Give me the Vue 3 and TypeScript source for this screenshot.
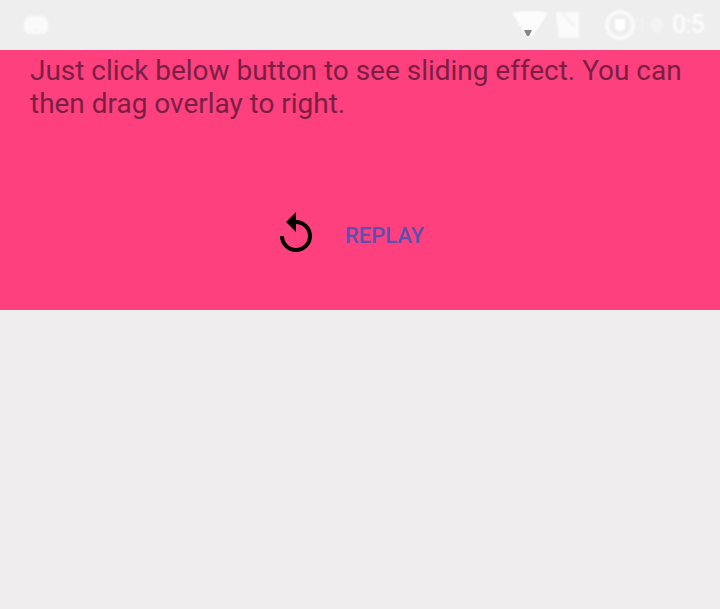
<script setup lang="ts">
import { ref } from 'vue'

const turns = ref<number>(0)
const message = 'Just click below button to see sliding effect. You can then drag overlay to right.'

function replay(): void {
  turns.value += 1
}
</script>

<template>
  <main class="screen">
    <header class="status-bar">
      <svg class="notification soft" viewBox="0 0 26 22" aria-hidden="true">
        <path d="M5 2h16l4 6v7l-3 5H4l-3-5V8z" fill="#fafafa" />
        <path d="M7 10h3M16 10h3M10 16h6" stroke="#f4f4f4" stroke-width="2" fill="none" />
      </svg>
      <svg class="wifi" viewBox="0 0 36 28" aria-hidden="true">
        <path class="soft" d="M0 2Q18-3 36 2L20 26h-5z" fill="#fcfcfc" />
        <path d="M12 19h8l-3 6h-2z" fill="#858585" />
      </svg>
      <svg class="sim soft" viewBox="0 0 24 28" aria-hidden="true">
        <path d="M1 1h23v26H4z" fill="#fbfbfb" />
        <path d="M7 1l12 14" stroke="#f2f2f2" stroke-width="3" />
      </svg>
      <svg class="battery soft" viewBox="0 0 32 32" aria-hidden="true">
        <circle cx="16" cy="16" r="13" fill="none" stroke="#fafafa" stroke-width="4" />
        <path d="M11 10h10v9l-3 3h-4l-3-3z" fill="#fff" />
      </svg>
      <svg class="smudge soft" viewBox="0 0 26 20" aria-hidden="true">
        <path d="M0 2h4v15H1" fill="#f1f1f1" />
        <ellipse cx="17" cy="10" rx="6" ry="8" fill="#f3f3f3" />
      </svg>
      <span class="clock soft">0:5</span>
    </header>
    <section class="overlay">
      <p class="message">{{ message }}</p>
      <div class="actions">
        <svg :key="turns" class="replay-icon" viewBox="0 0 24 24" aria-hidden="true">
          <path d="M12 5V1L7 6l5 5V7c3.31 0 6 2.69 6 6s-2.69 6-6 6-6-2.69-6-6H4c0 4.42 3.58 8 8 8s8-3.58 8-8-3.58-8-8-8z" />
        </svg>
        <button class="replay" type="button" @click="replay">REPLAY</button>
      </div>
    </section>
  </main>
</template>

<style>
body {
  margin: 0;
  background: #efeded;
}
</style>

<style scoped>
.screen {
  height: 609px;
  overflow: hidden;
  background: #efeded;
  font-family: Roboto, sans-serif;
}

.status-bar {
  display: flex;
  align-items: center;
  box-sizing: border-box;
  height: 50px;
  padding: 0 16px 0 23px;
  background: #eeeeee;
}

.soft {
  filter: blur(0.9px);
}

.notification {
  width: 26px;
  height: 22px;
  margin-right: auto;
}

.wifi {
  width: 36px;
  height: 28px;
  margin-right: 7px;
}

.sim {
  width: 24px;
  height: 28px;
  margin-right: 25px;
}

.battery {
  width: 32px;
  height: 32px;
  margin-right: 4px;
}

.smudge {
  width: 26px;
  height: 20px;
  margin-right: 6px;
}

.clock {
  width: 32px;
  color: #fcfcfc;
  font-size: 25px;
  font-weight: 500;
  line-height: 30px;
  letter-spacing: -1px;
  white-space: nowrap;
}

.overlay {
  box-sizing: border-box;
  height: 260px;
  padding: 4px 30px 0;
  background: #ff407f;
}

.message {
  height: 66px;
  margin: 0;
  color: #7a1f42;
  font-size: 28px;
  line-height: 33px;
  letter-spacing: -0.02px;
}

.actions {
  display: flex;
  align-items: center;
  height: 48px;
  margin-top: 90px;
  padding-left: 242px;
}

.replay-icon {
  width: 48px;
  height: 48px;
  fill: #000;
}

.replay {
  margin: 4px 0 0 25px;
  padding: 0;
  border: 0;
  background: none;
  color: #5b50ae;
  font: 500 22px/28px Roboto, sans-serif;
  cursor: pointer;
}
</style>
